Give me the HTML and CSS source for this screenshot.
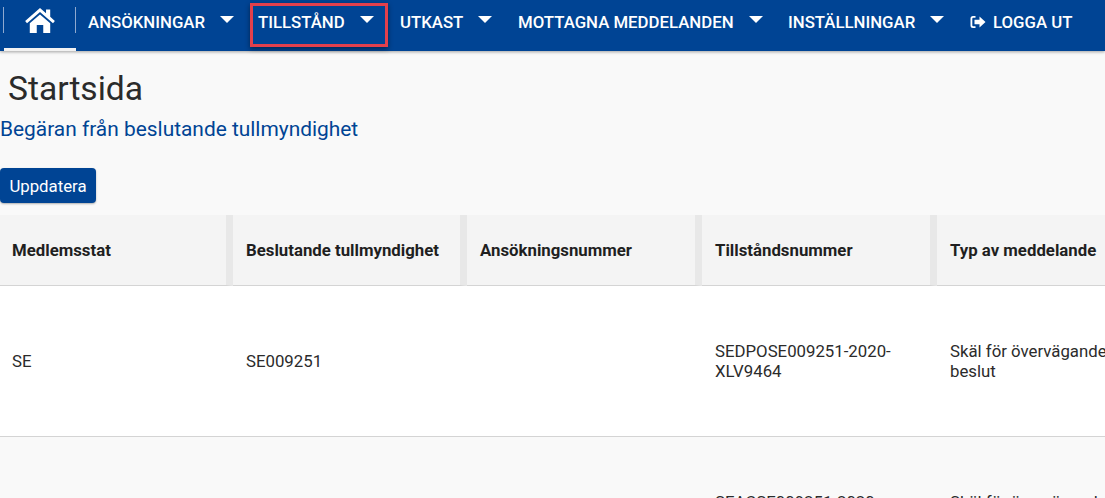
FILE: index.html
```html
<!DOCTYPE html>
<html lang="sv">
<head>
<meta charset="utf-8">
<title>Startsida</title>
<link rel="stylesheet" href="styles.css">
</head>
<body>
<nav class="nav">
  <a class="home" href="#">
    <svg class="home-icon" viewBox="0 0 32 28" aria-hidden="true"><path fill="#fff" d="M16 1 L22.5 6.6 V2.6 H27 V10.5 L32 15 L30 17.4 L16 5.4 L2 17.4 L0 15 Z"/><path fill="#fff" d="M16 8 L27 17.4 V28 H19.5 V19.5 H12.5 V28 H5 V17.4 Z"/></svg>
  </a>
  <a class="item" href="#">ANSÖKNINGAR<span class="caret"></span></a>
  <a class="item boxed" href="#">TILLSTÅND<span class="caret"></span></a>
  <a class="item" href="#">UTKAST<span class="caret"></span></a>
  <a class="item" href="#">MOTTAGNA MEDDELANDEN<span class="caret"></span></a>
  <a class="item" href="#">INSTÄLLNINGAR<span class="caret"></span></a>
  <a class="item logout" href="#">
    <svg class="logout-icon" viewBox="0 0 16 14" aria-hidden="true"><path fill="#fff" d="M5.5 1 H3 Q.5 1 .5 3.5 V10.5 Q.5 13 3 13 H5.5 V11.2 H3.2 Q2.3 11.2 2.3 10.3 V3.7 Q2.3 2.8 3.2 2.8 H5.5 Z"/><path fill="#fff" d="M9.5 1.6 L15.5 7 L9.5 12.4 V9.2 H4.5 V4.8 H9.5 Z"/></svg>LOGGA UT</a>
</nav>
<main class="main">
  <h1 class="title">Startsida</h1>
  <h2 class="subtitle">Begäran från beslutande tullmyndighet</h2>
  <button class="btn" type="button">Uppdatera</button>
  <table class="table">
    <thead>
      <tr>
        <th>Medlemsstat</th>
        <th>Beslutande tullmyndighet</th>
        <th>Ansökningsnummer</th>
        <th>Tillståndsnummer</th>
        <th>Typ av meddelande</th>
      </tr>
    </thead>
    <tbody>
      <tr class="row-white">
        <td>SE</td>
        <td>SE009251</td>
        <td></td>
        <td>SEDPOSE009251-2020-XLV9464</td>
        <td>Skäl för övervägande beslut</td>
      </tr>
      <tr class="row-grey">
        <td>SE</td>
        <td>SE009251</td>
        <td></td>
        <td>SEACSE009251-2020-XLV9464</td>
        <td>Skäl för övervägande beslut</td>
      </tr>
    </tbody>
  </table>
</main>
</body>
</html>
```
FILE: styles.css
```css
* { box-sizing: border-box; }
html, body { margin: 0; height: 498px; overflow: hidden; }
body { width: 1105px; background: #f9f9f9; font-family: Roboto, "Liberation Sans", sans-serif; color: #212121; }

.nav { display: flex; height: 51px; background: #004494; box-shadow: 0 1px 3px rgba(0,0,0,.35); position: relative; padding-left: 4px; }
.home { width: 72px; height: 51px; border-bottom: 3px solid #f2f2f2; display: flex; justify-content: center; padding-top: 7px; position: relative; }
.home::before, .home::after { content: ""; position: absolute; top: 7px; height: 26px; width: 1px; background: #8fa9cf; }
.home::before { left: -1px; }
.home::after { right: 0; }
.home-icon { width: 32px; height: 26px; }
.item { display: block; color: #fff; text-decoration: none; font-size: 16.8px; font-weight: 500; line-height: 20px; padding: 12px 0 0 12px; white-space: nowrap; }
.caret { display: inline-block; width: 0; height: 0; border-left: 7px solid transparent; border-right: 7px solid transparent; border-top: 7px solid #fff; margin-left: 15px; vertical-align: 5px; }
.item:nth-child(2) { width: 174px; }
.item:nth-child(3) { width: 138px; padding-left: 8px; margin-top: 3px; height: 44px; padding-top: 9px; outline: 3px solid #e2404c; outline-offset: -3px; box-shadow: 0 2px 5px rgba(0,0,0,.45); }
.item:nth-child(4) { width: 130px; padding-left: 12px; }
.item:nth-child(5) { width: 270px; padding-left: 0; }
.item:nth-child(6) { width: 182px; padding-left: 0; }
.logout { padding-left: 0; display: flex; align-items: flex-start; }
.logout-icon { width: 16px; height: 14px; margin: 3px 7px 0 0; }

.main { display: block; }
.title { margin: 0; padding: 19px 0 0 8px; font-size: 33.6px; font-weight: 400; line-height: 38px; color: #2b2b2b; }
.subtitle { margin: 0; padding-top: 9px; font-size: 20.9px; font-weight: 400; line-height: 24px; color: #004494; }
.btn { display: block; margin-top: 27px; width: 96px; height: 35px; padding: 0; background: #004494; color: #fff; border: 0; border-radius: 4px; font: 400 16.8px Roboto, "Liberation Sans", sans-serif; box-shadow: 0 1px 2px rgba(0,0,0,.3); }

.table { margin-top: 12px; width: 1172px; border-collapse: separate; border-spacing: 0; table-layout: fixed; font-size: 16.8px; }
.table th { height: 71px; background: #f4f4f4; border-right: 7px solid #e8e8e8; border-bottom: 1px solid #d4d4d4; text-align: left; font-weight: 700; padding: 0 0 0 13px; width: 235px; color: #1f1f1f; white-space: nowrap; }
.table th:first-child { width: 233px; padding-left: 12px; }
.table th:nth-child(2) { width: 234px; }
.table td { height: 151px; padding: 0 14px 0 13px; border-bottom: 1px solid #d4d4d4; vertical-align: middle; line-height: 20px; color: #2b2b2b; }
.table td:first-child { padding-left: 12px; }
.table td:last-child { padding-right: 40px; }
.row-white td { background: #fff; }
.row-grey td { background: #f9f9f9; }
```
